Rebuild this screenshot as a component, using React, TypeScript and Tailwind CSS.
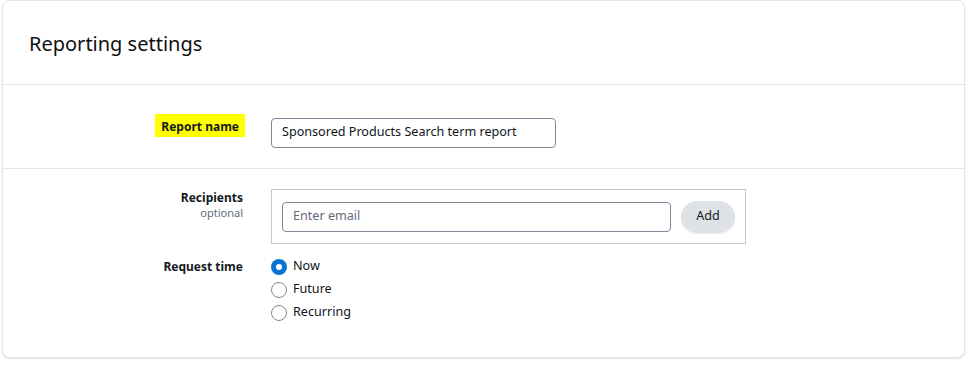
import { useState } from "react"

function Radio({ label, checked, onSelect }: { label: string; checked: boolean; onSelect: () => void }) {
  return (
    <label className="flex h-[23px] cursor-pointer items-center gap-[6px]" onClick={onSelect}>
      {checked ? (
        <span className="flex h-[16px] w-[16px] items-center justify-center rounded-full bg-[#0972d3]">
          <span className="h-[6px] w-[6px] rounded-full bg-white" />
        </span>
      ) : (
        <span className="h-[16px] w-[16px] rounded-full border border-[#7d8998] bg-white" />
      )}
      <span className="text-[12.6px] text-[#0f141a]">{label}</span>
    </label>
  )
}

export default function App() {
  const [time, setTime] = useState("Now")

  return (
    <div className="min-h-[373px] bg-white pl-[2px] pr-[8px] pt-0 font-['Noto_Sans',sans-serif]">
      <div className="w-[963px] rounded-[8px] border border-[#e3e5e8] bg-white shadow-[0_1px_2px_rgba(0,0,0,0.12)]">
        <div className="flex h-[83px] items-center px-[26px] pt-[2px]">
          <h1 className="text-[20px] text-[#0f1111]">Reporting settings</h1>
        </div>

        <div className="grid h-[84px] grid-cols-[241px_1fr] items-center gap-x-[27px] border-t border-[#e3e5e8]">
          <div className="flex justify-end pb-[2px]">
            <span className="-mr-[1px] bg-[#ffff00] px-[6px] pb-[1px] pt-[4px] text-[12px] font-bold text-[#16191f]">
              Report name
            </span>
          </div>
          <div className="pt-[12px]">
            <div className="flex h-[30px] w-[285px] items-center rounded-[4px] border border-[#7d8998] px-[10px] text-[12.6px] text-[#0f141a]">
              Sponsored Products Search term report
            </div>
          </div>
        </div>

        <div className="grid grid-cols-[241px_1fr] gap-x-[27px] border-t border-[#e3e5e8] pb-[33px] pt-[20px]">
          <div className="flex flex-col items-end pr-[1px] pt-[1px] leading-tight">
            <span className="text-[12px] font-bold text-[#16191f]">Recipients</span>
            <span className="mt-[1px] text-[11px] text-[#5f6b7a]">optional</span>
          </div>
          <div className="flex h-[55px] w-[475px] items-center gap-[10px] border border-[#c4c8ce] px-[10px]">
            <div className="flex h-[30px] w-[389px] items-center rounded-[4px] border border-[#7d8998] px-[10px] text-[12.6px] text-[#5f6b7a]">
              Enter email
            </div>
            <button className="flex h-[32px] w-[54px] items-center justify-center rounded-full bg-[#dfe2e6] text-[12.6px] text-[#16191f] shadow-[0_1px_1px_rgba(0,0,0,0.08)]">
              Add
            </button>
          </div>

          <div className="flex justify-end pr-[1px] pt-[14px]">
            <span className="text-[12px] font-bold text-[#16191f]">Request time</span>
          </div>
          <div className="flex flex-col pt-[11px]">
            {["Now", "Future", "Recurring"].map((t) => (
              <Radio key={t} label={t} checked={time === t} onSelect={() => setTime(t)} />
            ))}
          </div>
        </div>
      </div>
    </div>
  )
}
